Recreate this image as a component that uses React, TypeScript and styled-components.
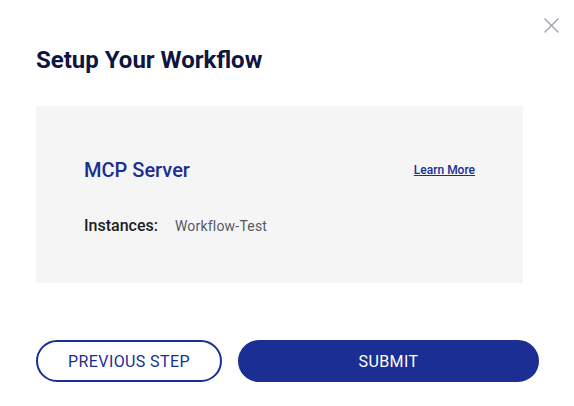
import React from 'react';
import styled, { createGlobalStyle } from 'styled-components';

const GlobalStyle = createGlobalStyle`
  html, body {
    margin: 0;
    padding: 0;
    background: #ffffff;
  }
  body {
    font-family: Roboto, "Liberation Sans", Arial, sans-serif;
    -webkit-font-smoothing: antialiased;
  }
`;

const Modal = styled("div")({
    position: "relative",
    width: 574,
    height: 406,
    boxSizing: "border-box",
    padding: "45px 35px 0 36px",
    background: "#fff",
});

const CloseButton = styled("button")({
    position: "absolute",
    top: 17,
    right: 15,
    width: 16,
    height: 16,
    padding: 0,
    border: "none",
    background: "transparent",
    cursor: "pointer",
    display: "flex",
    alignItems: "center",
    justifyContent: "center",
});

const Title = styled("h2")({
    margin: 0,
    fontSize: 24,
    lineHeight: "30px",
    fontWeight: 700,
    color: "#0e1541",
});

const Card = styled("section")({
    marginTop: 31,
    marginRight: 16,
    height: 177,
    boxSizing: "border-box",
    background: "#f5f5f5",
    padding: "52px 48px 0 48px",
});

const CardHeader = styled("div")({
    display: "flex",
    alignItems: "center",
    justifyContent: "space-between",
});

const ServerName = styled("h3")({
    margin: 0,
    fontSize: 20,
    lineHeight: "24px",
    fontWeight: 500,
    color: "#1a2e94",
});

const LearnMore = styled("a")({
    fontSize: 12,
    lineHeight: "16px",
    fontWeight: 500,
    color: "#1a2e94",
    textDecoration: "underline",
    cursor: "pointer",
});

const InfoRow = styled("div")({
    marginTop: 32,
    display: "flex",
    alignItems: "baseline",
    gap: 17,
});

const InfoLabel = styled("span")({
    fontSize: 16,
    lineHeight: "24px",
    fontWeight: 500,
    color: "#1b1d26",
});

const InfoValue = styled("span")({
    fontSize: 14,
    lineHeight: "24px",
    fontWeight: 400,
    letterSpacing: "0.2px",
    color: "#555a60",
});

const Actions = styled("div")({
    marginTop: 57,
    display: "flex",
    gap: 16,
});

const ActionButton = styled("button")<{ $primary?: boolean }>(({ $primary }) => ({
    height: 42,
    flex: $primary ? "1 1 auto" : "0 0 186px",
    boxSizing: "border-box",
    borderRadius: 21,
    border: "2px solid #1a2e94",
    background: $primary ? "#1a2e94" : "#fff",
    color: $primary ? "#fff" : "#1a2e94",
    fontFamily: "Roboto, 'Liberation Sans', Arial, sans-serif",
    fontSize: 16,
    fontWeight: 400,
    letterSpacing: "0.4px",
    textTransform: "uppercase",
    cursor: "pointer",
    padding: 0,
}));

const App: React.FC = () => {
  return (
    <>
      <GlobalStyle />
      <Modal>
        <CloseButton aria-label="Close">
          <svg width="15" height="15" viewBox="0 0 15 15">
            <path d="M1 1L14 14M14 1L1 14" stroke="#9ca1aa" strokeWidth="1.4" strokeLinecap="round" />
          </svg>
        </CloseButton>
        <Title>Setup Your Workflow</Title>
        <Card>
          <CardHeader>
            <ServerName>MCP Server</ServerName>
            <LearnMore>Learn More</LearnMore>
          </CardHeader>
          <InfoRow>
            <InfoLabel>Instances:</InfoLabel>
            <InfoValue>Workflow-Test</InfoValue>
          </InfoRow>
        </Card>
        <Actions>
          <ActionButton>Previous Step</ActionButton>
          <ActionButton $primary>Submit</ActionButton>
        </Actions>
      </Modal>
    </>
  );
};

export default App;
